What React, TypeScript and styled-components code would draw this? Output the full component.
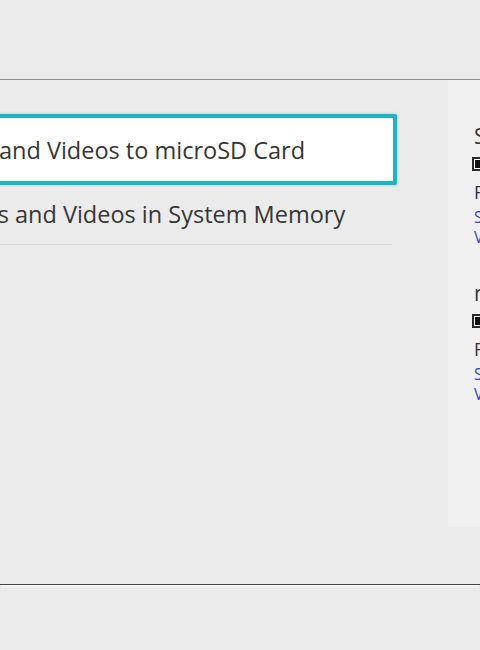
import React from 'react';
import styled, { createGlobalStyle } from 'styled-components';

const GlobalStyle = createGlobalStyle`
  html, body {
    margin: 0;
    padding: 0;
    background: #ebebeb;
    overflow: hidden;
  }
  body {
    font-family: 'Open Sans', 'Noto Sans', sans-serif;
    color: #333333;
  }
`;

const Screen = styled.div`
  display: flex;
  flex-direction: column;
  width: 480px;
  height: 650px;
  overflow: hidden;
  background: #ebebeb;
`;

const Header = styled.div`
  flex: 0 0 79px;
  border-bottom: 1px solid #8e8e8e;
`;

const Main = styled.div`
  display: flex;
  flex: 0 0 504px;
  border-bottom: 1px solid #464646;
  box-shadow: 0 3px 0 -1px #f6f6f6;
`;

const Menu = styled.div`
  display: flex;
  flex-direction: column;
  flex: 0 0 627px;
  margin-left: -230px;
  padding-top: 34px;
`;

const Row = styled.div<{ $selected?: boolean }>`
  display: flex;
  align-items: center;
  box-sizing: border-box;
  font-size: 23.5px;
  color: #363636;
  white-space: nowrap;
  ${p =>
    p.$selected
      ? `
    height: 71px;
    padding-left: 28px;
    background: #ffffff;
    border: 4px solid #1eb5c1;
    border-radius: 2px;
    box-shadow: 0 0 3px rgba(30, 181, 193, 0.5);
  `
      : `
    height: 60px;
    margin: 0 5px;
    padding-left: 43px;
    padding-bottom: 2px;
    border-bottom: 1px solid #d9d9d9;
  `}
`;

const Panel = styled.div`
  display: flex;
  flex-direction: column;
  flex: 0 0 300px;
  margin-left: 51px;
  height: 447px;
  box-sizing: border-box;
  padding: 43px 0 0 26px;
  background: #f0f0f0;
`;

const Group = styled.div`
  display: flex;
  flex-direction: column;
  & + & {
    margin-top: 33px;
  }
`;

const GroupTitle = styled.div`
  font-size: 21px;
  line-height: 27px;
  color: #333333;
  white-space: nowrap;
`;

const Bar = styled.div`
  width: 220px;
  height: 14px;
  margin: 7px 0 6px -2px;
  box-sizing: border-box;
  border: 2px solid #2a2a2a;
  padding: 1px;
  background: #ffffff;
`;

const BarFill = styled.div`
  height: 100%;
  background: #111111;
`;

const Free = styled.div`
  font-size: 18px;
  line-height: 30px;
  color: #333333;
  white-space: nowrap;
`;

const UsageList = styled.div`
  display: flex;
  flex-direction: column;
`;

const Usage = styled.div`
  font-size: 15.5px;
  line-height: 20px;
  color: #3b3fc4;
  white-space: nowrap;
`;

const storage = [
  { name: 'System Memory', used: 62, free: 'Free Space: 14.8 GB', shots: 'Screenshots: 214', videos: 'Videos: 12' },
  { name: 'microSD Card', used: 35, free: 'Free Space: 41.2 GB', shots: 'Screenshots: 86', videos: 'Videos: 4' },
];

export default function App(): React.ReactElement {
  return (
    <>
      <GlobalStyle />
      <Screen>
        <Header />
        <Main>
          <Menu>
            <Row $selected>Save Screenshots and Videos to microSD Card</Row>
            <Row>Save Screenshots and Videos in System Memory</Row>
          </Menu>
          <Panel>
            {storage.map(s => (
              <Group key={s.name}>
                <GroupTitle>{s.name}</GroupTitle>
                <Bar>
                  <BarFill style={{ width: `${s.used}%` }} />
                </Bar>
                <Free>{s.free}</Free>
                <UsageList>
                  <Usage>{s.shots}</Usage>
                  <Usage>{s.videos}</Usage>
                </UsageList>
              </Group>
            ))}
          </Panel>
        </Main>
      </Screen>
    </>
  );
}
